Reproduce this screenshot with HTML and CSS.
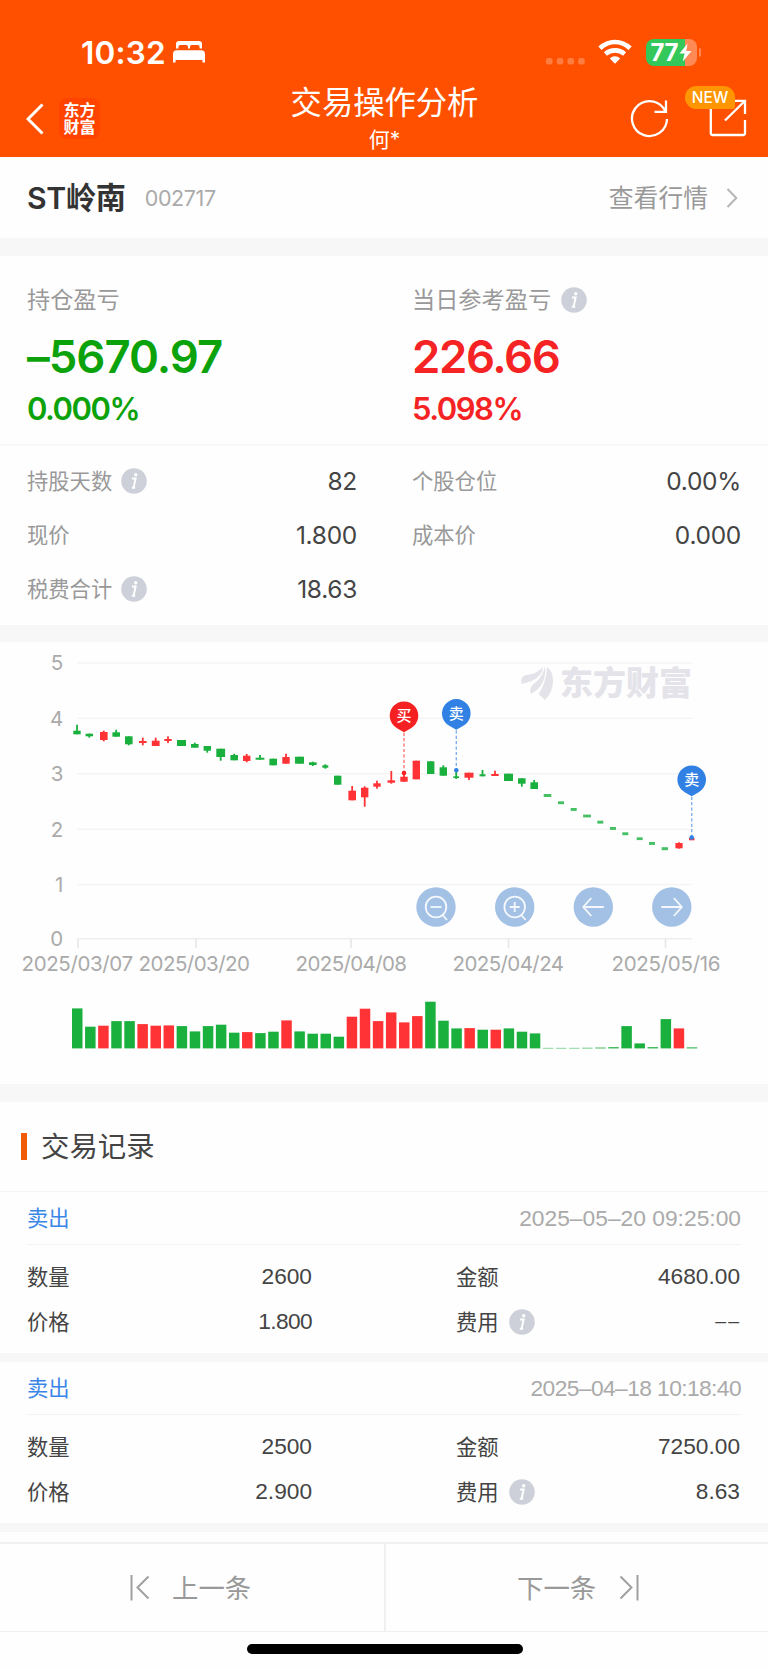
FILE: index.html
```html
<!DOCTYPE html>
<html lang="zh-CN">
<head>
<meta charset="utf-8">
<title>交易操作分析</title>
<link rel="stylesheet" href="styles.css">
</head>
<body>
<svg class="defs" width="0" height="0" aria-hidden="true">
  <symbol id="info" viewBox="0 0 26 26">
    <circle cx="13" cy="13" r="12.8" fill="#cdd0d8"/>
    <circle cx="14.7" cy="6.8" r="1.7" fill="#fff"/>
    <path d="M11 10.6h3.6L12.6 19.6M10.8 19.8h3.4" fill="none" stroke="#fff" stroke-width="2"/>
  </symbol>
</svg>

<header class="header">
  <div class="status">
    <div class="status-left">
      <span class="time">10:32</span>
      <svg width="34" height="24" viewBox="0 0 34 24" fill="#fff">
        <path d="M4 8.600V4Q4 1 7 1H27Q30 1 30 4V8.600H27.600V7.200Q27.600 5 25.600 5H19.600Q18 5 18 7V8.600H16V7Q16 5 14.400 5H8.400Q6.400 5 6.400 7.200V8.600Z"/>
        <path d="M1 22.500V14Q1 10.200 4.600 10.200H29.400Q33 10.200 33 14V22.500H30.400V20H3.600V22.500Z"/>
      </svg>
    </div>
    <div class="status-right">
      <svg class="cell" width="40" height="8" viewBox="0 0 40 8" fill="#ff7d40">
        <rect x="0" y="1" width="6.500" height="6.500" rx="2"/><rect x="10.800" y="1" width="6.500" height="6.500" rx="2"/><rect x="21.500" y="1" width="6.500" height="6.500" rx="2"/><rect x="32.200" y="1" width="6.500" height="6.500" rx="2"/>
      </svg>
      <svg class="wifi" width="34" height="26" viewBox="0 0 34 26" fill="none" stroke="#fff" stroke-width="4.600">
        <path d="M1.900 9.200Q8.500 3 17 3T32.100 9.200"/>
        <path d="M7.400 15Q11.500 11.400 17 11.400T26.600 15"/>
        <path d="M17 24.800L11.800 19.600Q14 17.300 17 17.300T22.200 19.600Z" fill="#fff" stroke="none"/>
      </svg>
      <div class="battery">
        <span>77</span>
        <svg width="13" height="19" viewBox="0 0 13 19"><path d="M8.600 0.500L0.500 10.500H5.500L3.800 18.500L12.500 8H7.300Z" fill="#fff"/></svg>
      </div>
      <i class="battery-cap"></i>
    </div>
  </div>
  <div class="navbar">
    <div class="nav-left">
      <svg width="18" height="32" viewBox="0 0 18 32" fill="none" stroke="#fff" stroke-width="3"><path d="M16.500 1.500L2 16L16.500 30.500"/></svg>
      <div class="brand"><span>东方</span><span>财富</span></div>
    </div>
    <div class="nav-title"><h1>交易操作分析</h1><p>何*</p></div>
    <div class="nav-right">
      <svg width="39" height="39" viewBox="0 0 39 39" fill="none" stroke="#fff" stroke-width="2.300">
        <path d="M37 20A17.500 17.500 0 1 1 33.600 9.200L35.500 12.600"/><path d="M36 1.500V12.800H24.500"/>
      </svg>
      <div class="share">
        <svg width="38" height="38" viewBox="0 0 38 38" fill="none" stroke="#fff" stroke-width="2.300">
          <path d="M1.800 9V34Q1.800 36 3.800 36H34Q36 36 36 34V21M25 1.800H36V15M36 1.800L16 21.500"/>
        </svg>
        <b class="new">NEW</b>
      </div>
    </div>
  </div>
</header>

<section class="stock">
  <h2>ST岭南</h2><span class="code">002717</span>
  <a class="quote"><span>查看行情</span>
    <svg width="12" height="22" viewBox="0 0 12 22" fill="none" stroke="#b5b5b5" stroke-width="2"><path d="M1.500 2L10.300 11L1.500 20"/></svg>
  </a>
</section>

<section class="summary">
  <div class="profits">
    <div class="profit down">
      <div class="profit-label"><span>持仓盈亏</span></div>
      <div class="amount">–5670.97</div>
      <div class="percent">0.000%</div>
    </div>
    <div class="profit up">
      <div class="profit-label"><span>当日参考盈亏</span><svg class="info"><use href="#info"/></svg></div>
      <div class="amount">226.66</div>
      <div class="percent">5.098%</div>
    </div>
  </div>
  <div class="stats">
    <div class="stat"><span>持股天数</span><svg class="info"><use href="#info"/></svg><b>82</b></div>
    <div class="stat"><span>个股仓位</span><b>0.00%</b></div>
    <div class="stat"><span>现价</span><b>1.800</b></div>
    <div class="stat"><span>成本价</span><b>0.000</b></div>
    <div class="stat"><span>税费合计</span><svg class="info"><use href="#info"/></svg><b>18.63</b></div>
  </div>
</section>

<section class="chart">
  <svg id="chart" width="768" height="442" viewBox="0 642 768 442"></svg>
</section>

<section class="records">
  <h3><span>交易记录</span></h3>
  <article class="record">
    <div class="record-head"><span>卖出</span><time>2025–05–20 09:25:00</time></div>
    <div class="record-body">
      <div class="field"><span>数量</span><b>2600</b></div>
      <div class="field"><span>金额</span><b>4680.00</b></div>
      <div class="field"><span>价格</span><b class="tight">1.800</b></div>
      <div class="field"><span>费用</span><svg class="info"><use href="#info"/></svg><b class="empty">––</b></div>
    </div>
  </article>
  <article class="record">
    <div class="record-head"><span>卖出</span><time class="tight">2025–04–18 10:18:40</time></div>
    <div class="record-body">
      <div class="field"><span>数量</span><b>2500</b></div>
      <div class="field"><span>金额</span><b>7250.00</b></div>
      <div class="field"><span>价格</span><b>2.900</b></div>
      <div class="field"><span>费用</span><svg class="info"><use href="#info"/></svg><b>8.63</b></div>
    </div>
  </article>
</section>

<nav class="pager">
  <a>
    <svg width="20" height="27" viewBox="0 0 20 27" fill="none" stroke="#a0a0a0" stroke-width="2"><path d="M1.500 1V26.500M18.500 2.500L7.500 13.500L18.500 24.500"/></svg>
    <span>上一条</span>
  </a>
  <a>
    <span>下一条</span>
    <svg width="20" height="27" viewBox="0 0 20 27" fill="none" stroke="#a0a0a0" stroke-width="2"><path d="M18.500 1V26.500M1.500 2.500L12.500 13.500L1.500 24.500"/></svg>
  </a>
</nav>
<footer class="home"><i></i></footer>
<script src="chart.js"></script>
</body>
</html>
```

FILE: styles.css
```css
* { box-sizing: border-box; }
body, h1, h2, h3, p { margin: 0; font-weight: 400; }
body {
  width: 768px;
  height: 1669px;
  overflow: hidden;
  background: #fefefe;
  color: #444;
  font-family: Inter, "Noto Sans CJK SC", sans-serif;
}
b, i { font-weight: 400; font-style: normal; }
svg { display: block; flex: none; }
.defs { position: absolute; }
.info { width: 26px; height: 26px; }

/* header */
.header { height: 157px; background: #ff5000; color: #fff; }
.status {
  height: 80px;
  padding: 24px 67px 0 81px;
  display: flex;
  justify-content: space-between;
}
.status-left, .status-right { display: flex; align-items: center; height: 56px; }
.time { width: 91px; font-size: 31.500px; font-weight: 600; letter-spacing: 0.200px; white-space: nowrap; }
.cell { margin: 17px 12px 0 0; }
.wifi { margin-right: 14px; }
.battery {
  width: 51px;
  height: 27px;
  border-radius: 8px;
  padding-left: 5px;
  display: flex;
  align-items: center;
  gap: 1px;
  background: linear-gradient(90deg, #34c759 0 39px, #ff8a55 39px);
  font-size: 24px;
  font-weight: 700;
  letter-spacing: -0.500px;
}
.battery-cap { width: 2.500px; height: 9px; margin-left: 2px; border-radius: 0 3px 3px 0; background: #ff8a55; }
.navbar {
  height: 77px;
  padding: 0 21px 0 26px;
  display: grid;
  grid-template-columns: 200px 1fr 200px;
}
.nav-left { display: flex; align-items: center; height: 77px; gap: 15px; }
.brand {
  width: 41px;
  height: 41px;
  border-radius: 8px;
  background: #ff4300;
  display: flex;
  flex-direction: column;
  align-items: center;
  justify-content: center;
  font-size: 16px;
  font-weight: 700;
  line-height: 17px;
}
.nav-title { text-align: center; transform: translateX(-2px); }
.nav-title h1 { font-size: 31.300px; line-height: 46px; }
.nav-title p { font-size: 21px; line-height: 27px; }
.nav-right { display: flex; justify-content: flex-end; align-items: center; height: 76px; gap: 40px; }
.share { position: relative; }
.new {
  position: absolute;
  left: -24px;
  top: -13px;
  width: 50px;
  height: 23px;
  border-radius: 12px 12px 3px 12px;
  background: #ff9500;
  font-size: 15.500px;
  font-weight: 500;
  line-height: 24px;
  text-align: center;
}

/* stock row */
.stock {
  height: 81px;
  padding: 0 30px 0 27px;
  display: flex;
  align-items: center;
}
.stock h2 { padding-bottom: 4px; font-size: 30.200px; font-weight: 600; letter-spacing: -0.300px; color: #333; }
.code { margin-left: 19px; font-size: 21.500px; letter-spacing: -0.400px; color: #aaa; }
.quote { margin-left: auto; display: flex; align-items: center; gap: 18px; font-size: 24.800px; color: #999; }
.quote span { padding-bottom: 3px; }

/* summary */
.summary { height: 404px; border: solid #f7f7f7; border-width: 18px 0 17px; }
.profits { height: 190px; padding: 27px 28px 0 27px; display: grid; grid-template-columns: 385px 1fr; border-bottom: 2px solid #f8f8f8; }
.profit-label { height: 33px; display: flex; align-items: center; gap: 10px; font-size: 23.200px; color: #999; }
.profit-label span { padding-bottom: 3px; }
.amount { height: 64px; margin-top: 9px; font-size: 45.500px; font-weight: 600; letter-spacing: -1.400px; line-height: 64px; }
.down .amount { letter-spacing: -1px; }
.percent { height: 36px; margin-top: 2px; font-size: 31px; font-weight: 600; letter-spacing: -1.500px; line-height: 36px; }
.down { color: #0ca20c; }
.up { color: #f52323; }
.stats { padding: 8px 27px 0 27px; display: grid; grid-template-columns: 330px 329px; column-gap: 55px; }
.stat { height: 54px; display: flex; align-items: center; gap: 9px; font-size: 21.300px; color: #999; }
.stat span, .field span, .record-head span { padding-bottom: 3px; }
.stat b { margin-left: auto; font-size: 24.500px; color: #444; letter-spacing: -0.300px; }

/* chart */
.chart { height: 460px; border-bottom: 18px solid #f7f7f7; }
.axis { font-family: Inter, sans-serif; font-size: 20.500px; fill: #aaa; }
.pin-text { font-family: "Noto Sans CJK SC", sans-serif; font-size: 15px; font-weight: 500; fill: #fff; text-anchor: middle; }
.watermark { font-family: "Noto Sans CJK SC", sans-serif; font-size: 33px; font-weight: 900; fill: #e4e3e9; }

/* records */
.records { height: 440px; }
.records h3 {
  height: 90px;
  padding-left: 21px;
  border-bottom: 1px solid #f5f5f5;
  display: flex;
  align-items: center;
  gap: 14px;
  font-size: 28.400px;
  color: #444;
}
.records h3::before { content: ""; width: 6px; height: 27px; background: #f05a00; }
.records h3 span { padding-bottom: 4px; }
.record { height: 170px; padding: 0 27px 0 27px; border-bottom: 9px solid #f7f7f7; font-family: "Liberation Sans", "Noto Sans CJK SC", sans-serif; }
.record-head {
  height: 53px;
  border-bottom: 1px solid #f3f3f3;
  display: flex;
  align-items: center;
  justify-content: space-between;
  font-size: 21.300px;
  color: #3a86e8;
}
.record-head time { font-size: 22.800px; color: #aaa; }
.record-head time.tight { letter-spacing: -0.600px; }
.record-body { padding-top: 9px; display: grid; grid-template-columns: 285px 284px; column-gap: 144px; }
.field { height: 45px; display: flex; align-items: center; gap: 10px; font-size: 21.300px; color: #444; }
.field b { margin-left: auto; font-size: 22.700px; }
.field .tight { letter-spacing: -0.600px; }
.field .empty { font-size: 19.500px; letter-spacing: 2px; margin-right: -1px; }

/* pager */
.pager { height: 90px; display: grid; grid-template-columns: 386px 1fr; border: solid #f0f0f0; border-width: 2px 0 1px; }
.pager a { display: flex; align-items: center; gap: 22px; font-size: 26.400px; color: #999; }
.pager span { padding-bottom: 3px; }
.pager a:first-child { padding-left: 130px; border-right: 2px solid #f0f0f0; }
.pager a:last-child { padding-left: 131px; gap: 23px; }
.home { height: 37px; padding: 11.500px 0 0 1px; display: flex; justify-content: center; align-items: flex-start; }
.home i { width: 276px; height: 10px; border-radius: 5px; background: #000; }
```

FILE: chart.js
```js
const GREEN = '#19b03e', RED = '#ff3236', BUY = '#f52022', SELL = '#3181e4';
const out = [];
const rect = (x, y, w, h, fill, extra = '') =>
  out.push(`<rect x="${x}" y="${y}" width="${w}" height="${h}" fill="${fill}" ${extra}/>`);

// price grid
[663, 718.3, 773.7, 829.2, 884.5, 938.7].forEach((y, i) => {
  rect(77, y - 0.7, 615, 1.5, i === 5 ? '#eee' : '#f4f4f4');
  out.push(`<text class="axis" x="63.300" y="${y + 7.4}" text-anchor="end">${5 - i}</text>`);
});

// date axis
[[78, 22, '2025/03/07'], [196, 139, '2025/03/20'], [351, 296, '2025/04/08'], [508.5, 453, '2025/04/24'], [665.500, 612, '2025/05/16']]
  .forEach(([tick, x, label]) => {
    rect(tick - 0.8, 939, 1.6, 9, '#e6e6e6');
    out.push(`<text class="axis" x="${x - 0.5}" y="970.500" textLength="${label.endsWith('16') ? 109 : 111.5}">${label}</text>`);
  });

// brand watermark
out.push(`<g fill="#e4e3e9"><path d="M521.500 684Q520 676 526 675Q537 674 543 667Q542 680 521.500 684Z"/>
<path d="M530.500 694Q529 686 536 682Q543 676 545 666Q547 686 530.500 694Z"/>
<path d="M545 700L538.500 694Q546 684 547 667Q553 671 553 681Q553 692 545 700Z"/></g>
<text class="watermark" x="560" y="695" textLength="132">东方财富</text>`);

// candles: centre x, body top, body bottom, wick top, wick bottom, body width, colour
const candles = [
  [77, 730.7, 734.3, 724.7, 734.3, 7.4, 'g'], [89.3, 733.7, 736.3, 733.7, 737.7, 7.4, 'g'],
  [103.8, 732, 740, 730.7, 741.3, 7.6, 'r'], [116.2, 732.3, 736.7, 729.7, 736.7, 7.6, 'g'],
  [128.8, 736.3, 744.3, 736.3, 745.3, 7.6, 'g'], [142.8, 741, 743, 737.7, 745.3, 7.6, 'r'],
  [155.7, 740.7, 746, 737.7, 746, 7.8, 'r'], [168, 739, 741, 736.3, 743, 7.4, 'r'],
  [181.5, 740, 746, 740, 746, 9, 'g'], [194.8, 744, 747.7, 742.7, 747.7, 7.6, 'g'],
  [207.3, 746, 750.7, 746, 752.7, 7.4, 'g'], [220.7, 748.7, 757, 748.7, 760.7, 8.8, 'g'],
  [234.2, 755, 760.3, 753.7, 760.3, 7.6, 'g'], [246.7, 755.7, 761, 754, 762.3, 7.4, 'r'],
  [260, 757.7, 759.7, 755, 759.7, 8.8, 'g'], [273.2, 758.7, 765.3, 758.7, 765.3, 7.6, 'g'],
  [286, 757, 763.7, 753.7, 763.7, 7.4, 'r'], [299.5, 756.7, 763.7, 756.7, 763.7, 9, 'g'],
  [312.8, 762.3, 765, 761.7, 766, 7.6, 'g'], [325.3, 765.3, 767.7, 764.3, 768.7, 6, 'g'],
  [337.7, 775.7, 784.7, 775.7, 784.7, 7.4, 'g'], [352.2, 790.7, 800.3, 786, 800.3, 7.6, 'r'],
  [364.7, 787.7, 797.3, 786.3, 806.7, 7.4, 'r'], [377, 783.3, 786.7, 780.7, 788.7, 7.4, 'r'],
  [391.3, 780.3, 782.7, 771, 783.7, 7.6, 'r'], [404, 776.7, 781.7, 771.7, 781.7, 7.4, 'r'],
  [416.3, 760.7, 779.3, 760.7, 779.3, 7.4, 'r'], [430.7, 761.3, 774, 761.3, 774, 7.4, 'g'],
  [443.3, 767.3, 775.7, 765.3, 775.7, 7.4, 'g'], [456.2, 776.3, 778, 772, 779, 5.8, 'g'],
  [469, 772.7, 777.7, 772.7, 780, 9, 'r'], [482.5, 774.3, 776.3, 770, 776.3, 6, 'g'],
  [495, 774, 776, 770.7, 776, 7.4, 'r'], [508.5, 773.7, 781, 773.7, 781, 9, 'g'],
  [521.8, 778.3, 783.7, 778.3, 786.7, 7.6, 'g'], [534.2, 782.3, 789, 780, 789, 7.6, 'g'],
  [547.5, 794, 797, 0, 0, 7.6, 'p'], [561, 801.3, 804.2, 0, 0, 6, 'p'], [573.7, 808, 810.9, 0, 0, 6, 'p'],
  [587, 814.6, 817.4, 0, 0, 7.8, 'p'], [600.3, 820.7, 823.6, 0, 0, 6, 'p'], [613, 827, 829.9, 0, 0, 6, 'p'],
  [625.3, 832.3, 835.2, 0, 0, 6, 'p'], [639.7, 837.3, 840.1, 0, 0, 6, 'p'], [652, 842, 844.9, 0, 0, 6, 'p'],
  [664.8, 847.2, 850.2, 0, 0, 6.3, 'p'], [679, 843, 848.3, 842.3, 848.7, 7.2, 'r'], [691.7, 838, 840.3, 0, 0, 5.5, 'r'],
];
const shade = { g: GREEN, r: RED, p: '#47c065' };
candles.forEach(([cx, top, bottom, hi, lo, w, c]) => {
  rect(cx - w / 2, top, w, bottom - top, shade[c]);
  if (lo > hi) rect(cx - 0.9, hi, 1.8, lo - hi, shade[c]);
});

// volume: height + colour
'40g 21.7g 22.7r 27.3g 27.3g 24.3r 22.7r 23r 22.3g 17g 22.3g 23.7g 15.7g 16.3r 15.3g 16.7g 28r 17g 14.7g 14.7g 11.7g 31.7r 39.7r 27.3r 36r 26r 32.3r 46.7g 27.7g 20g 20.3r 18.7g 18.7r 20g 16.7g 15g .5g .5g .5g .6g .8g 1.2g 22.3g 5g 1.2g 29.3g 20r 1g'
  .split(' ').forEach((bar, i) => {
    const h = parseFloat(bar);
    rect(72 + 13.08 * i, 1048.4 - h, 10.5, h, bar.endsWith('r') ? RED : GREEN);
  });

// trade pins
[[404, 715.700, 773, BUY, '买'], [456.300, 713.300, 770.300, SELL, '卖'], [691.700, 779.700, 837.500, SELL, '卖']]
  .forEach(([x, y, end, color, label]) => {
    out.push(`<path d="M${x} ${y + 17}V${end}" stroke="${color}" stroke-width="1.400" stroke-dasharray="3.200 2.200" opacity=".6"/>
<circle cx="${x}" cy="${end}" r="2.300" fill="${color}"/>
<path d="M${x} ${y + 16.500}L${x - 7} ${y + 12.500}A14.300 14.300 0 1 1 ${x + 7} ${y + 12.500}Z" fill="${color}"/>
<text class="pin-text" x="${x}" y="${y + 5.500}">${label}</text>`);
  });

// zoom and pan buttons
const lens = '<circle r="10.300"/><path d="M6.500 8L11 13"/>';
[[436, lens + '<path d="M-5.500 0H5.500"/>'], [514.700, lens + '<path d="M-5 0H5M0 -5V5"/>'],
 [593.300, '<path d="M10.500 0H-10M-2 -9L-10 0L-2 9"/>'], [671.800, '<path d="M-10.500 0H10M2 -9L10 0L2 9"/>']]
  .forEach(([x, icon]) => out.push(`<circle cx="${x}" cy="907" r="19.700" fill="#a3c1e5"/>
<g transform="translate(${x} 907)" fill="none" stroke="#f4f8fc" stroke-width="1.800">${icon}</g>`));

document.getElementById('chart').innerHTML = out.join('\n');
```
